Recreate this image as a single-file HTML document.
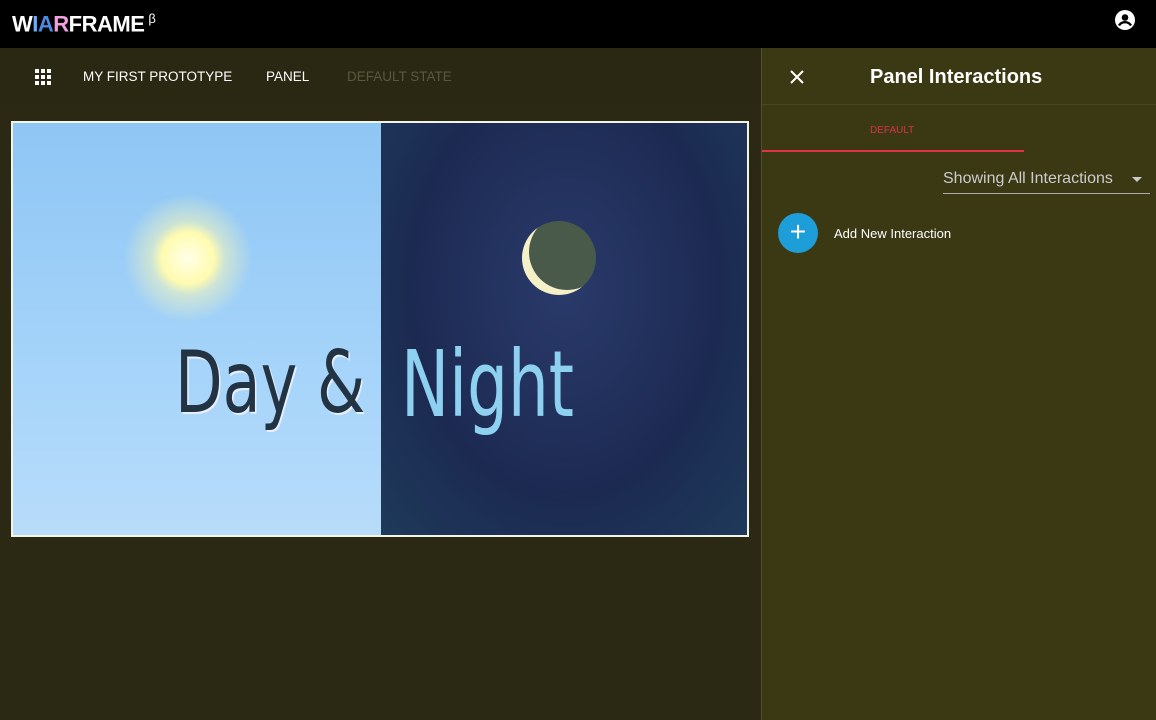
<!DOCTYPE html>
<html><head><meta charset="utf-8"><style>
*{margin:0;padding:0;box-sizing:border-box}
body{width:1156px;height:720px;overflow:hidden;background:#2b2914;font-family:"Liberation Sans",sans-serif;position:relative}
.top{position:absolute;left:0;top:0;width:1156px;height:48px;background:#000}
.logo{position:absolute;left:12px;top:11px;font-weight:900;font-size:22px;color:#fff;letter-spacing:-0.5px}
.sub{position:absolute;left:0;top:48px;width:761px;height:57px;background:#2a2812}
.nav{position:absolute;top:69px;font-size:13.5px;color:#fff}
.panel{position:absolute;left:761px;top:48px;width:395px;height:672px;background:#3b3814;border-left:1px solid #55502a}
.img{position:absolute;left:11px;top:121px;width:738px;height:416px;border:2px solid #f4f4e4;overflow:hidden}
</style></head><body>
<div class="top"></div>
<div class="logo">W<span style="color:#6ab0ff">I</span><span style="color:#4a8ae0">A</span><span style="color:#f0a0e0">R</span>FRAME<sup style="font-size:13px;font-weight:400;margin-left:4px">β</sup></div>
<svg style="position:absolute;left:1115px;top:10px" width="20" height="20" viewBox="0 0 20 20"><circle cx="10" cy="10" r="10" fill="#fff"/><circle cx="10" cy="7.5" r="3.3" fill="#000"/><path d="M4 15.5c1.5-2.5 3.5-3.3 6-3.3s4.5.8 6 3.3" fill="none" stroke="#000" stroke-width="2.4"/></svg>
<div class="sub"></div>
<svg style="position:absolute;left:35px;top:69px" width="16" height="16"><g fill="#fff"><rect x="0" y="0" width="4" height="4"/><rect x="6" y="0" width="4" height="4"/><rect x="12" y="0" width="4" height="4"/><rect x="0" y="6" width="4" height="4"/><rect x="6" y="6" width="4" height="4"/><rect x="12" y="6" width="4" height="4"/><rect x="0" y="12" width="4" height="4"/><rect x="6" y="12" width="4" height="4"/><rect x="12" y="12" width="4" height="4"/></g></svg>
<div class="nav" style="left:83px">MY FIRST PROTOTYPE</div>
<div class="nav" style="left:266px">PANEL</div>
<div class="nav" style="left:347px;color:#5a5840">DEFAULT STATE</div>
<div class="img">
<div style="position:absolute;left:0;top:0;width:368px;height:412px;background:linear-gradient(#8ec6f4,#a6d4fa 60%,#b8dcfa)"></div>
<div style="position:absolute;left:368px;top:0;width:368px;height:412px;background:radial-gradient(ellipse at 50% 40%,#2a3a6a,#1c2a52 60%,#1e3a5a)"></div>
<div style="position:absolute;left:110px;top:70px;width:130px;height:130px;border-radius:50%;background:radial-gradient(#ffffe8 0,#fffbb0 28%,rgba(255,250,180,.5) 40%,rgba(255,255,255,0) 70%)"></div>
<div style="position:absolute;left:509px;top:98px;width:74px;height:74px;border-radius:50%;background:#4a5a4a;box-shadow:8px -6px 0 -1px #f4f0c8 inset"></div>
<div style="position:absolute;left:162px;top:210px;font-family:'DejaVu Sans',sans-serif;font-size:86px;color:#223344;transform:scaleX(.72);transform-origin:left top;text-shadow:2px 2px 0 #e8f0ff">Day &amp;</div>
<div style="position:absolute;left:388px;top:208px;font-family:'DejaVu Sans',sans-serif;font-size:92px;color:#8ed0f0;transform:scaleX(.7);transform-origin:left top">Night</div>
</div>
<div class="panel">
<svg style="position:absolute;left:28px;top:22px" width="14" height="14"><path d="M1 1L13 13M13 1L1 13" stroke="#fff" stroke-width="2"/></svg>
<div style="position:absolute;left:108px;top:18px;font-size:20px;font-weight:bold;color:#fff">Panel Interactions</div>
<div style="position:absolute;left:0;top:56px;width:395px;height:1px;background:#4a4620"></div>
<div style="position:absolute;left:108px;top:77px;font-size:10px;color:#d8344a">DEFAULT</div>
<div style="position:absolute;left:0;top:102px;width:262px;height:2px;background:#e0304a"></div>
<div style="position:absolute;left:181px;top:122px;font-size:16px;color:#ccc">Showing All Interactions</div>
<div style="position:absolute;left:370px;top:129px;border:5px solid transparent;border-top-color:#ccc"></div>
<div style="position:absolute;left:181px;top:145px;width:207px;height:1px;background:#aaa"></div>
<div style="position:absolute;left:16px;top:165px;width:40px;height:40px;border-radius:50%;background:#1e9ed8;color:#fff;font-size:28px;line-height:38px;text-align:center">+</div>
<div style="position:absolute;left:72px;top:178px;font-size:13px;color:#fff">Add New Interaction</div>
</div>
</body></html>
